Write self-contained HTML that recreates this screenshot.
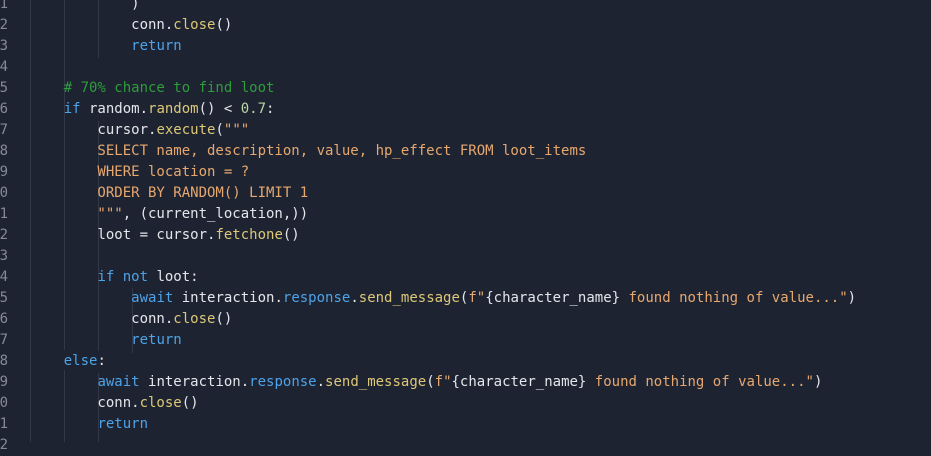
<!DOCTYPE html>
<html><head><style>
html,body{margin:0;padding:0;width:931px;height:442px;overflow:hidden;background:#1e2332;}
.wrap{position:absolute;top:-6px;left:0;}
.l{position:relative;height:21px;line-height:21px;font-family:"DejaVu Sans Mono","Liberation Mono",monospace;font-size:14px;white-space:pre;color:#e4e6eb;}
.n{position:absolute;left:-20px;width:28px;text-align:right;color:#858a96;}
.c{position:absolute;left:30px;}
.g{position:absolute;top:0;width:1px;background:#323848;}
.k{color:#4da3e8}.f{color:#dcc878}.s{color:#e6a86e}.cm{color:#2f9c3c}.num{color:#b9d6a4}
</style></head><body>
<div class="g" style="left:30px;height:442px"></div>
<div class="g" style="left:64px;top:0;height:350px"></div>
<div class="g" style="left:64px;top:370px;height:72px"></div>
<div class="g" style="left:98px;top:0;height:58px"></div>
<div class="g" style="left:98px;top:121px;height:230px"></div>
<div class="g" style="left:98px;top:373px;height:69px"></div>
<div class="g" style="left:132px;top:288px;height:65px"></div>
<div class="wrap">
<div class="l"><span class="n">1</span><span class="c">            )</span></div>
<div class="l"><span class="n">2</span><span class="c">            conn.<span class="f">close</span>()</span></div>
<div class="l"><span class="n">3</span><span class="c">            <span class="k">return</span></span></div>
<div class="l"><span class="n">4</span><span class="c"></span></div>
<div class="l"><span class="n">5</span><span class="c">    <span class="cm"># 70% chance to find loot</span></span></div>
<div class="l"><span class="n">6</span><span class="c">    <span class="k">if</span> random.<span class="f">random</span>() &lt; <span class="num">0.7</span>:</span></div>
<div class="l"><span class="n">7</span><span class="c">        cursor.<span class="f">execute</span>(<span class="s">"""</span></span></div>
<div class="l"><span class="n">8</span><span class="c"><span class="s">        SELECT name, description, value, hp_effect FROM loot_items</span></span></div>
<div class="l"><span class="n">9</span><span class="c"><span class="s">        WHERE location = ?</span></span></div>
<div class="l"><span class="n">0</span><span class="c"><span class="s">        ORDER BY RANDOM() LIMIT 1</span></span></div>
<div class="l"><span class="n">1</span><span class="c"><span class="s">        """</span>, (current_location,))</span></div>
<div class="l"><span class="n">2</span><span class="c">        loot = cursor.<span class="f">fetchone</span>()</span></div>
<div class="l"><span class="n">3</span><span class="c"></span></div>
<div class="l"><span class="n">4</span><span class="c">        <span class="k">if not</span> loot:</span></div>
<div class="l"><span class="n">5</span><span class="c">            <span class="k">await</span> interaction.<span class="k">response</span>.<span class="f">send_message</span>(<span class="s">f"</span>{character_name}<span class="s"> found nothing of value..."</span>)</span></div>
<div class="l"><span class="n">6</span><span class="c">            conn.<span class="f">close</span>()</span></div>
<div class="l"><span class="n">7</span><span class="c">            <span class="k">return</span></span></div>
<div class="l"><span class="n">8</span><span class="c">    <span class="k">else</span>:</span></div>
<div class="l"><span class="n">9</span><span class="c">        <span class="k">await</span> interaction.<span class="k">response</span>.<span class="f">send_message</span>(<span class="s">f"</span>{character_name}<span class="s"> found nothing of value..."</span>)</span></div>
<div class="l"><span class="n">0</span><span class="c">        conn.<span class="f">close</span>()</span></div>
<div class="l"><span class="n">1</span><span class="c">        <span class="k">return</span></span></div>
<div class="l"><span class="n">2</span><span class="c"></span></div>
</div>
</body></html>
